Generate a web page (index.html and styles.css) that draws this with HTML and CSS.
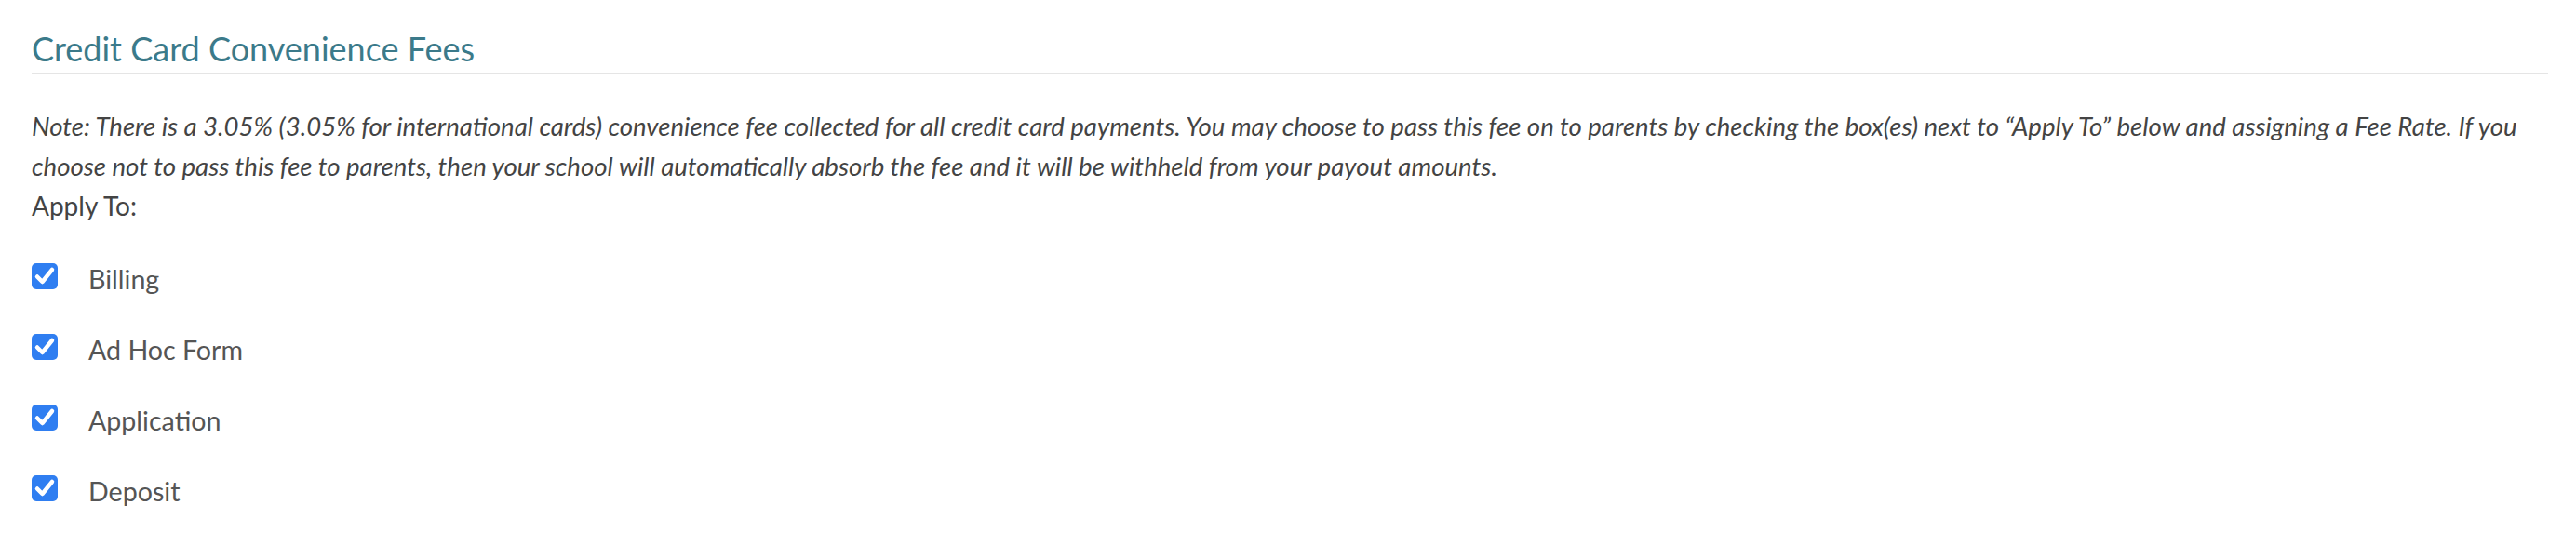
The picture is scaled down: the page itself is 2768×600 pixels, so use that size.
FILE: index.html
```html
<!DOCTYPE html>
<html>
<head>
<meta charset="utf-8">
<link rel="stylesheet" href="styles.css">
</head>
<body>
<div class="page">
  <h2 class="section-title">Credit Card Convenience Fees</h2>
  <p class="note">Note: There is a 3.05% (3.05% for international cards) convenience fee collected for all credit card payments. You may choose to pass this fee on to parents by checking the box(es) next to “Apply To” below and assigning a Fee Rate. If you choose not to pass this fee to parents, then your school will automatically absorb the fee and it will be withheld from your payout amounts.</p>
  <div class="apply-label">Apply To:</div>
  <ul class="options">
    <li class="option"><span class="check"><svg viewBox="0 0 28 28" width="28" height="28"><path d="M6 14.5 L11.5 20 L22 7" fill="none" stroke="#fff" stroke-width="4.5" stroke-linecap="round" stroke-linejoin="round"/></svg></span><span class="option-text">Billing</span></li>
    <li class="option"><span class="check"><svg viewBox="0 0 28 28" width="28" height="28"><path d="M6 14.5 L11.5 20 L22 7" fill="none" stroke="#fff" stroke-width="4.5" stroke-linecap="round" stroke-linejoin="round"/></svg></span><span class="option-text">Ad Hoc Form</span></li>
    <li class="option"><span class="check"><svg viewBox="0 0 28 28" width="28" height="28"><path d="M6 14.5 L11.5 20 L22 7" fill="none" stroke="#fff" stroke-width="4.5" stroke-linecap="round" stroke-linejoin="round"/></svg></span><span class="option-text">Application</span></li>
    <li class="option"><span class="check"><svg viewBox="0 0 28 28" width="28" height="28"><path d="M6 14.5 L11.5 20 L22 7" fill="none" stroke="#fff" stroke-width="4.5" stroke-linecap="round" stroke-linejoin="round"/></svg></span><span class="option-text">Deposit</span></li>
  </ul>
</div>
</body>
</html>
```

FILE: styles.css
```css
html, body {
  margin: 0;
  padding: 0;
  background: #fff;
}
body {
  font-family: Lato, "Open Sans", sans-serif;
  color: #444;
}
.page {
  padding: 30px 30px 60px 34px;
  display: flex;
  flex-direction: column;
}
.section-title {
  margin: 0;
  font-weight: 400;
  font-size: 36px;
  line-height: 44px;
  color: #3b7a8a;
  padding-bottom: 4px;
  border-bottom: 2px solid #e5e5e5;
}
.note {
  margin: 34px 0 0 0;
  font-style: italic;
  font-size: 27.6px;
  line-height: 43px;
  color: #444;
}
.apply-label {
  font-size: 28px;
  line-height: 43px;
  color: #444;
}
.options {
  list-style: none;
  margin: 40px 0 0 0;
  padding: 0;
  display: flex;
  flex-direction: column;
  gap: 48px;
}
.option {
  display: flex;
  align-items: center;
  height: 28px;
}
.check {
  width: 28px;
  height: 28px;
  border-radius: 5px;
  background: #2f7ef1;
  display: flex;
  flex: none;
}
.option-text {
  margin-left: 33px;
  font-size: 28.6px;
  color: #555;
  position: relative;
  top: 3px;
}
```
